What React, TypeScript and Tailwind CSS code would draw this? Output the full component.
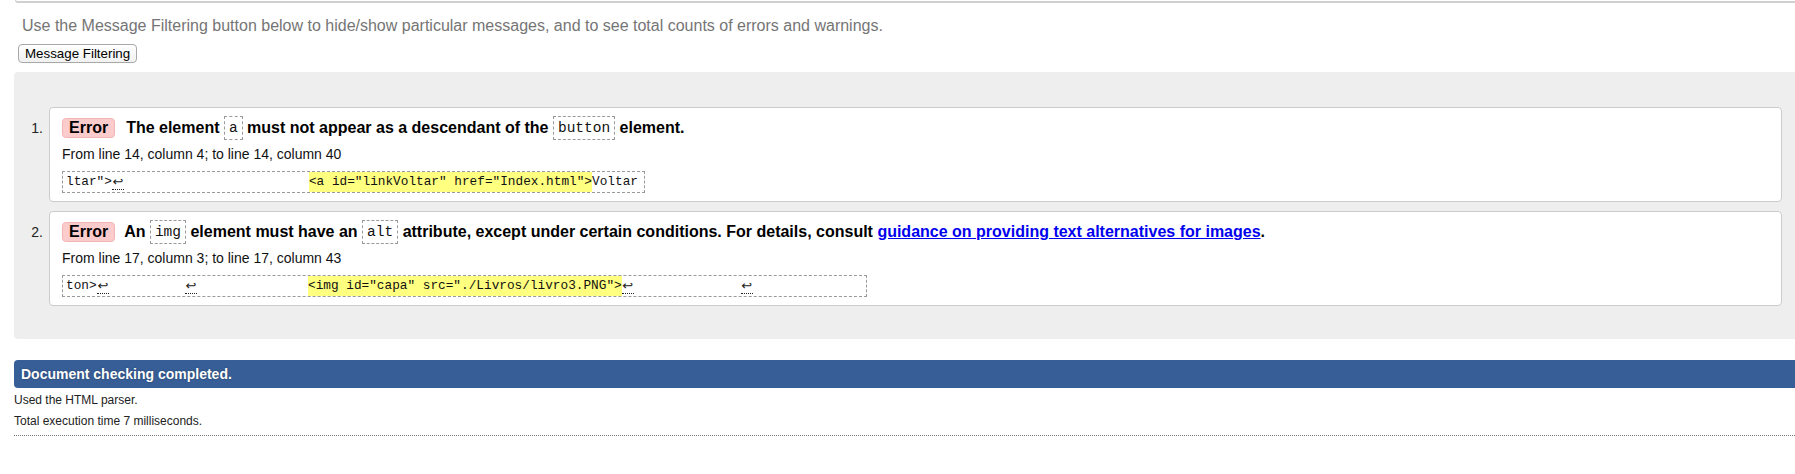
import React from "react";

function Ret({ className = "" }: { className?: string }) {
  return (
    <span
      className={
        "self-start w-[12px] h-[18px] leading-[19px] text-[13px] text-center text-[#222] font-['DejaVu_Sans',sans-serif] border-b border-dotted border-[#222] " +
        className
      }
    >
      ↩
    </span>
  );
}

function InlineCode({ children }: { children: React.ReactNode }) {
  return (
    <code className="inline-block align-top h-[24px] leading-[22px] px-[4px] border border-dashed border-[#9a9a9a] font-['Liberation_Mono',monospace] font-normal text-[14.5px] text-[#111]">
      {children}
    </code>
  );
}

function Badge() {
  return (
    <span className="inline-block align-top mt-[2px] h-[20px] leading-[18px] px-[6px] border border-[#efb5b5] bg-[#fccccc] rounded-[4px] text-black">
      Error
    </span>
  );
}

export default function App() {
  return (
    <div className="w-[1795px] min-h-[474px] bg-white overflow-hidden font-['Liberation_Sans',Arial,sans-serif] text-black">
      <div className="ml-[15px] h-[3px] border-l border-b-2 border-[#d0d0d0] rounded-bl-[4px]" />
      <p className="mt-[13px] ml-[22px] text-[16px] leading-[20px] text-[#757575]">
        Use the Message Filtering button below to hide/show particular messages, and to see total counts of errors and warnings.
      </p>
      <div className="mt-[8px] ml-[18px] flex">
        <button className="h-[19px] px-[6px] text-[13.33px] leading-[17px] text-black border border-[#a8a8a8] rounded-[4px] bg-gradient-to-b from-[#ffffff] to-[#f1f1f1]">
          Message Filtering
        </button>
      </div>

      <div className="mt-[9px] ml-[14px] bg-[#eeeeee] rounded-l-[4px] pt-[35px] pb-[33px] flex flex-col gap-[9px]">
        <div className="flex items-start">
          <div className="w-[29px] mt-[9px] text-right text-[14px] leading-[24px] text-[#222]">1.</div>
          <div className="ml-[6px] mr-[13px] flex-1 bg-white border border-[#cccccc] rounded-[4px] pt-[8px] pb-[8px] pl-[12px] pr-[12px]">
            <p className="h-[24px] leading-[24px] text-[16px] font-bold whitespace-nowrap">
              <Badge />
              <span className="ml-[11px]">The element </span>
              <InlineCode>a</InlineCode>
              <span> must not appear as a descendant of the </span>
              <InlineCode>button</InlineCode>
              <span> element.</span>
            </p>
            <p className="mt-[4px] text-[14px] leading-[20px] text-[#111]">
              From line 14, column 4; to line 14, column 40
            </p>
            <div className="mt-[7px] flex h-[22px] w-[583px] border border-dashed border-[#9a9a9a] pl-[3px] font-['Liberation_Mono',monospace] text-[12.75px] leading-[20px] whitespace-pre text-[#111]">
              <span>ltar"&gt;</span>
              <Ret />
              <span className="ml-[185px] bg-[#ffff80]">{'<a id="linkVoltar" href="Index.html">'}</span>
              <span>Voltar</span>
            </div>
          </div>
        </div>

        <div className="flex items-start">
          <div className="w-[29px] mt-[9px] text-right text-[14px] leading-[24px] text-[#222]">2.</div>
          <div className="ml-[6px] mr-[13px] flex-1 bg-white border border-[#cccccc] rounded-[4px] pt-[8px] pb-[8px] pl-[12px] pr-[12px]">
            <p className="h-[24px] leading-[24px] text-[16px] font-bold whitespace-nowrap">
              <Badge />
              <span className="ml-[9px]">An </span>
              <InlineCode>img</InlineCode>
              <span> element must have an </span>
              <InlineCode>alt</InlineCode>
              <span> attribute, except under certain conditions. For details, consult </span>
              <a href="#" className="text-[#0000ee] underline">
                guidance on providing text alternatives for images
              </a>
              <span>.</span>
            </p>
            <p className="mt-[4px] text-[14px] leading-[20px] text-[#111]">
              From line 17, column 3; to line 17, column 43
            </p>
            <div className="mt-[7px] flex h-[22px] w-[805px] border border-dashed border-[#9a9a9a] pl-[3px] font-['Liberation_Mono',monospace] text-[12.75px] leading-[20px] whitespace-pre text-[#111]">
              <span className="w-[31px]">ton&gt;</span>
              <Ret />
              <Ret className="ml-[76px]" />
              <span className="ml-[111px] bg-[#ffff80]">{'<img id="capa" src="./Livros/livro3.PNG">'}</span>
              <Ret />
              <Ret className="ml-[107px]" />
            </div>
          </div>
        </div>
      </div>

      <div className="mt-[21px] ml-[14px] h-[28px] bg-[#375e96] rounded-l-[4px] pl-[7px] text-white font-bold text-[14px] leading-[28px] [text-shadow:0_0_2px_rgba(0,0,0,0.35)]">
        Document checking completed.
      </div>
      <div className="mt-[2px] ml-[14px] text-[12px] leading-[21px] text-[#222]">
        <p>Used the HTML parser.</p>
        <p>Total execution time 7 milliseconds.</p>
      </div>
      <div className="mt-[3px] ml-[14px] border-t border-dotted border-[#777]" />
    </div>
  );
}
